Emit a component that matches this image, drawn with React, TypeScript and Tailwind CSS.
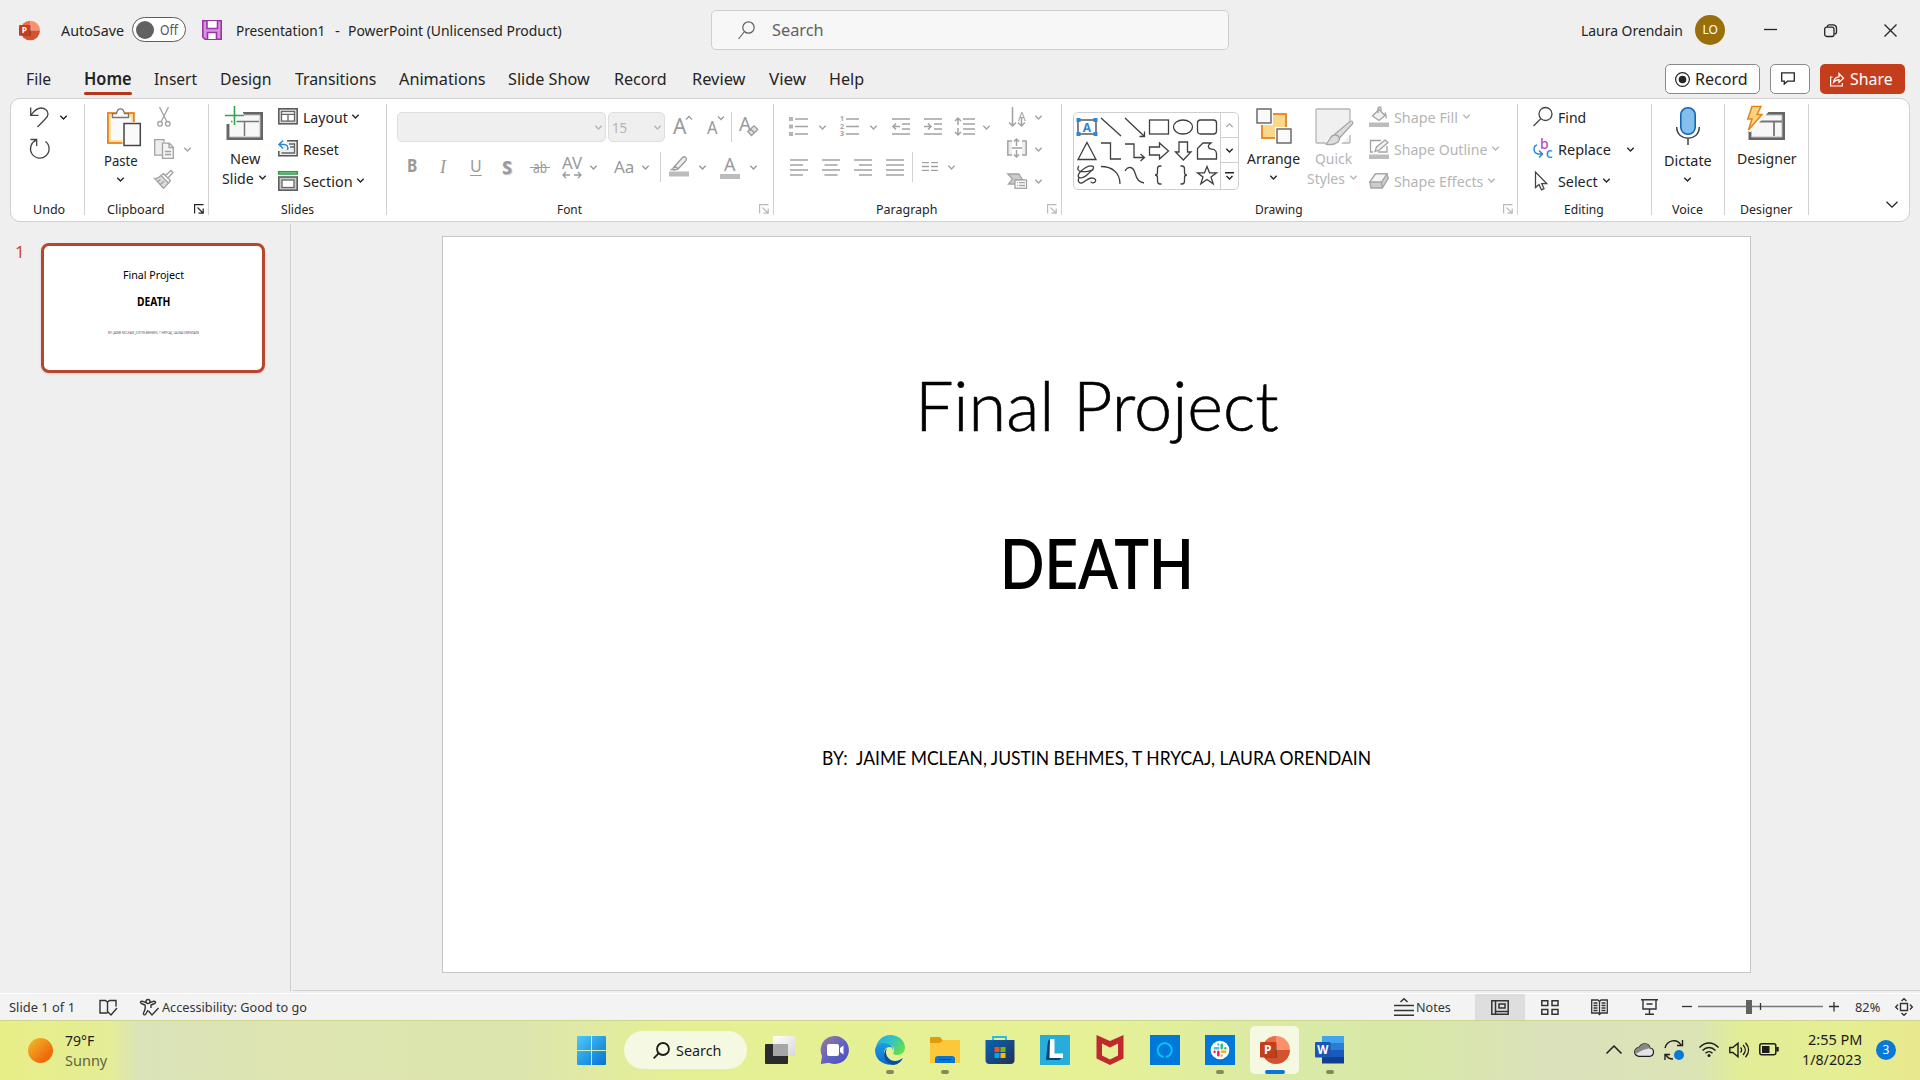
import React, { useLayoutEffect, useRef, useState } from 'react';

type TextProps = { w: number; children: string; className?: string };

/* Single line of text condensed or widened to the given width. */
function T({ w, children, className = '' }: TextProps) {
  const ref = useRef<HTMLSpanElement>(null);
  const [scale, setScale] = useState(1);
  useLayoutEffect(() => {
    if (ref.current) setScale(w / ref.current.offsetWidth);
  }, [w, children]);
  return (
    <span className={`block shrink-0 whitespace-nowrap leading-[20px] ${className}`} style={{ width: w }}>
      <span ref={ref} className="inline-block origin-left" style={{ transform: `scaleX(${scale})` }}>
        {children}
      </span>
    </span>
  );
}

type IconProps = { w: number; h: number; children: React.ReactNode; className?: string; sw?: number };

function I({ w, h, children, className = '', sw = 1.3 }: IconProps) {
  return (
    <svg width={w} height={h} viewBox={`0 0 ${w} ${h}`} fill="none" stroke="currentColor" strokeWidth={sw} className={`block shrink-0 overflow-visible ${className}`}>
      {children}
    </svg>
  );
}

function Chev({ className = '' }: { className?: string }) {
  return (
    <I w={7} h={5} sw={1.4} className={className}>
      <path d="M0.3 0.8 3.5 4 6.7 0.8" />
    </I>
  );
}

function Launcher({ className = '' }: { className?: string }) {
  return (
    <I w={10} h={10} sw={1.2} className={className}>
      <path d="M0.6 9.5V0.6H9.5M3.5 3.5 9 9M9.2 4.5V9.2H4.5" />
    </I>
  );
}

function Divider() {
  return <div className="mt-[5px] h-[111px] w-px shrink-0 bg-[#d1d1d1]" />;
}

type GroupProps = { className: string; label: string; labelW: number; labelClass: string; children: React.ReactNode; launcher?: string };

function Group({ className, label, labelW, labelClass, children, launcher }: GroupProps) {
  return (
    <>
      <section className={`flex shrink-0 flex-col ${className}`}>
        <div className="flex h-[99px]">{children}</div>
        <div className="flex h-[22px] items-center justify-between">
          <T w={labelW} className={`text-[13.3px] ${labelClass}`}>{label}</T>
          {launcher && <Launcher className={launcher} />}
        </div>
      </section>
      <Divider />
    </>
  );
}

function PptLogo({ size }: { size: number }) {
  return (
    <svg width={size} height={size} viewBox="0 0 30 30" className="block shrink-0">
      <path d="M16 1a14 14 0 0 0-14 14h14z" fill="#ed6c47" />
      <path d="M16 1a14 14 0 0 1 14 14H16z" fill="#ff8f6b" />
      <path d="M2 15a14 14 0 0 0 28 0z" fill="#d35230" />
      <path d="M5 7h10a2 2 0 0 1 2 2v14H5z" fill="#000" opacity=".25" />
      <rect y="7" width="15.5" height="15.5" rx="1.3" fill="#c43e1c" />
      <text x="7.8" y="19" textAnchor="middle" fontSize="12" fontWeight="700" fill="#fff" fontFamily="Noto Sans, sans-serif">P</text>
    </svg>
  );
}

function TitleBar() {
  return (
    <header className="flex h-[60px] items-center pl-[19px] text-[15px]">
      <PptLogo size={21} />
      <T w={63} className="ml-[21px]">AutoSave</T>
      <div className="-mt-px ml-2 flex h-[25px] w-[54px] items-center rounded-full border border-[#5c5c5c] bg-white pl-[3px]">
        <div className="size-[18px] rounded-full bg-[#616161]" />
        <T w={18} className="ml-[6px] text-[13.5px] text-[#555]">Off</T>
      </div>
      <I w={20} h={20} className="ml-4 text-[#9a35a8]" sw={1.6}>
        <path d="M.8.8h18.4v18.4H3L.8 17z" fill="#d993dd" />
        <path d="M5 1v7.5h10.500V1M5.500 19v-6.500h9V19" fill="#fff" />
      </I>
      <T w={89} className="ml-[14px]">Presentation1</T>
      <T w={5} className="ml-[10px]">-</T>
      <T w={214} className="ml-[8px]">PowerPoint (Unlicensed Product)</T>
      <div className="ml-[149px] flex h-[40px] w-[518px] items-center rounded-[5px] border border-[#cecece] bg-[#f7f7f7] pl-[26px] text-[#616161]">
        <I w={17} h={19} sw={1.2}>
          <circle cx="10.500" cy="6.500" r="5.700" />
          <path d="M6.500 10.500.5 18" />
        </I>
        <T w={52} className="-mt-px ml-[17px] text-[16px]">Search</T>
      </div>
      <T w={102} className="ml-[352px]">Laura Orendain</T>
      <div className="ml-[12px] flex size-[30px] items-center justify-center rounded-full bg-[#986f0b] text-white">
        <T w={15} className="text-[12px]">LO</T>
      </div>
      <I w={13} h={12} className="ml-[39px]"><path d="M0 5.500h13" /></I>
      <I w={13} h={13} className="ml-[47px]">
        <rect x=".7" y="3.200" width="9.300" height="9.300" rx="2" />
        <path d="M3.300 3V2.500A2 2 0 0 1 5 .8h4a3.500 3.500 0 0 1 3.500 3.500v4A2 2 0 0 1 10.500 10" />
      </I>
      <I w={13} h={13} className="ml-[47px]"><path d="M.5.5l12 12M12.500.5l-12 12" /></I>
    </header>
  );
}

function Tabs() {
  return (
    <nav className="flex h-[38px] items-center pl-[26px] text-[17px]">
      <T w={25}>File</T>
      <div className="ml-[33px] flex h-[38px] w-[48px] flex-col pt-[9px]">
        <T w={48} className="font-semibold">Home</T>
        <div className="mt-[3px] h-[3px] rounded-full bg-[#b7351b]" />
      </div>
      <T w={43} className="ml-[22px]">Insert</T>
      <T w={52} className="ml-[23px]">Design</T>
      <T w={81} className="ml-[23px]">Transitions</T>
      <T w={87} className="ml-[23px]">Animations</T>
      <T w={82} className="ml-[22px]">Slide Show</T>
      <T w={53} className="ml-[24px]">Record</T>
      <T w={53} className="ml-[25px]">Review</T>
      <T w={37} className="ml-[24px]">View</T>
      <T w={35} className="ml-[23px]">Help</T>
      <div className="ml-[801px] flex h-[30px] w-[95px] items-center rounded-[5px] border border-[#8a8a8a] bg-white pl-[9px]">
        <I w={15} h={15} sw={1.2}>
          <circle cx="7.500" cy="7.500" r="6.900" />
          <circle cx="7.500" cy="7.500" r="3.800" fill="currentColor" stroke="none" />
        </I>
        <T w={53} className="ml-[5px]">Record</T>
      </div>
      <div className="ml-[10px] flex h-[30px] w-[40px] items-center rounded-[5px] border border-[#8a8a8a] bg-white pl-[10px]">
        <I w={14} h={13} className="-mt-[2px]"><path d="M.7.8h12.600v8.400H6.500L3.300 12V9.200H.7z" /></I>
      </div>
      <div className="ml-[10px] flex h-[30px] w-[85px] items-center rounded-[5px] bg-[#c43e1c] pl-[10px] text-white">
        <I w={14} h={15} sw={1.2}>
          <path d="M2.500 5H.6v9h11.800v-3" />
          <path d="M3.500 10.500c.3-3.500 2-5.500 5.500-5.700V1.500l4.600 4.800L9 10.500V7.700c-2.500 0-4 .8-5.500 2.800z" />
        </I>
        <T w={43} className="ml-[6px]">Share</T>
      </div>
    </nav>
  );
}

function UndoGroup() {
  return (
    <Group className="w-[73px]" label="Undo" labelW={32} labelClass="ml-[22px]">
      <div className="flex flex-col pl-[19px] pt-[7px] text-[#444]">
        <div className="flex h-[22px] items-center">
          <I w={19} h={20}><path d="M.7.5v7.800h7.800M.9 8.100C4 4 6.500 1 11 1c4 0 7 2.500 7 6 0 2-1 3.300-2.500 4.800L7.500 20" /></I>
          <Chev className="ml-[11px] text-[#222]" />
        </div>
        <I w={20} h={21} className="mt-[10px]"><path d="M.5 1.500h6.200v6.500M6.300 2.200A9.300 9.300 0 1 0 15.500 3.500" /></I>
      </div>
    </Group>
  );
}

function ClipboardGroup() {
  return (
    <Group className="w-[123px]" label="Clipboard" labelW={58} labelClass="ml-[22px]" launcher="mr-[4px]">
      <div className="flex w-[53px] flex-col pl-[19px] pt-[9px]">
        <I w={34} h={38} className="ml-[3px]">
          <rect x=".9" y="5" width="26" height="30" fill="#fbe0a0" stroke="#e8821c" strokeWidth="1.800" />
          <rect x="4" y="9" width="20" height="23" fill="#fafafa" stroke="none" />
          <path d="M5.500 9.500V5.700h4C10 2.500 11 .9 13.500.9s3.500 1.600 4 4.800h4v3.800z" fill="#fafafa" stroke="#777" />
          <rect x="15.500" y="14" width="19" height="24" fill="#fff" stroke="none" />
          <rect x="17" y="15.500" width="16.300" height="22" fill="#fafafa" stroke="#444" strokeWidth="1.500" />
        </I>
        <T w={34} className="mt-[4px] text-[15px]">Paste</T>
        <Chev className="ml-[13px] mt-[7px]" />
      </div>
      <div className="flex flex-col pl-[16px] pt-[2px] text-[#a2a2a2]">
        <div className="flex h-8 items-center pl-[3px]">
          <I w={14} h={20}>
            <path d="M2.500 0 9.500 14M11.500 0l-7 14" />
            <circle cx="3" cy="16.800" r="2.300" /><circle cx="10.800" cy="16.800" r="2.300" />
          </I>
        </div>
        <div className="flex h-8 items-center">
          <I w={20} h={20}>
            <path d="M10 3V.7H.7v15.500H8" fill="#eee" />
            <path d="M8.500 4.200h6.800l4 4V19.300H8.500zM15 4.500v4h4M11 12.500h6M11 15.500h6" fill="#f4f4f4" />
          </I>
          <Chev className="ml-[10px]" />
        </div>
        <div className="flex h-8 items-center">
          <I w={20} h={19} className="-mt-[3px]">
            <path d="M.7 8.500c3 .5 4.500-1 6.300-3l7.500 7.500c-2 2-3 3.500-5 5.300z" fill="#ddd" />
            <path d="M7 5.500l2.500-1.800 7 6.800-2 2.500M11.500 5.500l5.500-5 2 2-5 5.500M3.500 12l3-2.500M6 15l4-4" />
          </I>
        </div>
      </div>
    </Group>
  );
}

function SlidesGroup() {
  return (
    <Group className="w-[177px]" label="Slides" labelW={33} labelClass="ml-[72px]">
      <div className="flex w-[69px] flex-col pl-[13px] pt-[7px] text-[15px]">
        <I w={38} h={35} className="ml-[3px] text-[#777]">
          <path d="M18 7.500h18.500V32.500H3V18" fill="#f7f7f7" stroke="#666" strokeWidth="3" />
          <path d="M6 15.500H34M19.500 15.500V30" strokeWidth="1.500" />
          <path d="M4.500 18V31H35V9H18" fill="none" stroke="#bbb" strokeWidth="1" />
          <path d="M9.500 0v19M0 9.500h19" stroke="#fff" strokeWidth="4" />
          <path d="M9.500 0v19M0 9.500h19" stroke="#2da44e" strokeWidth="1.600" />
        </I>
        <T w={30} className="ml-[8px] mt-[7px]">New</T>
        <div className="flex h-5 items-center">
          <T w={32}>Slide</T>
          <Chev className="-mt-[2px] ml-[5px]" />
        </div>
      </div>
      <div className="flex flex-col pt-[2px] text-[15px]">
        <div className="flex h-8 items-center">
          <I w={20} h={17} className="-mt-px text-[#666]">
            <rect x=".8" y=".8" width="18.400" height="15" fill="#ddd" stroke="#555" strokeWidth="1.500" />
            <rect x="3.500" y="3.500" width="13" height="9.600" fill="#fff" /><path d="M3.500 6.300h13M10 6.300v7" />
          </I>
          <T w={45} className="ml-[5px]">Layout</T>
          <Chev className="-mt-[2px] ml-[4px]" />
        </div>
        <div className="flex h-8 items-center">
          <I w={20} h={17} className="-mt-px text-[#666]">
            <path d="M9 .8h10.200v15H.8V11" fill="#eee" stroke="#555" strokeWidth="1.500" />
            <path d="M11 4h5.500v9h-13M12 7h4" />
            <path d="M1 4.500h5c3 0 4.500 2 4 5.500M5 .5 1 4.500l4 4" stroke="#fff" strokeWidth="3.500" />
            <path d="M1 4.500h5c3 0 4.500 2 3.500 5.500M5 .5 1 4.500l4 4" stroke="#2b88d8" strokeWidth="1.500" />
          </I>
          <T w={36} className="ml-[5px]">Reset</T>
        </div>
        <div className="flex h-8 items-center">
          <I w={20} h={20} className="-mt-px text-[#666]">
            <rect x=".6" y=".6" width="18.800" height="2.500" fill="#6fcf87" stroke="#2d9a4a" />
            <rect x=".8" y="6" width="18.400" height="13.200" fill="#ccc" stroke="#555" strokeWidth="1.500" />
            <rect x="4" y="9" width="12" height="7.500" fill="#fff" />
          </I>
          <T w={50} className="ml-[5px]">Section</T>
          <Chev className="-mt-[2px] ml-[4px]" />
        </div>
      </div>
    </Group>
  );
}

function FontGroup() {
  return (
    <Group className="w-[386px]" label="Font" labelW={25} labelClass="ml-[170px]" launcher="mr-[4px] text-[#b8b8b8]">
      <div className="flex flex-col pt-[13px] text-[#9a9a9a]">
        <div className="flex h-[30px] items-center">
          <div className="ml-[10px] flex h-[30px] w-[209px] items-center justify-end rounded-[5px] border border-[#dedede] bg-[#efefef] pr-[3px] text-[#b5b5b5]"><Chev /></div>
          <div className="ml-[2px] flex h-[30px] w-[57px] items-center justify-between rounded-[5px] border border-[#dedede] bg-[#efefef] pl-[3px] pr-[3px] text-[#b5b5b5]">
            <T w={15} className="text-[15px]">15</T><Chev />
          </div>
          <div className="-mt-[4px] ml-[8px] flex items-start">
            <T w={13} className="mt-px text-[21px]">A</T>
            <I w={6} h={4} className="mt-px"><path d="M0 3.500 3 .5l3 3" /></I>
          </div>
          <div className="-mt-[3px] ml-[15px] flex items-start">
            <T w={11} className="mt-[2px] text-[18px]">A</T>
            <I w={6} h={4} className="mt-px"><path d="M0 .5l3 3 3-3" /></I>
          </div>
          <div className="ml-[7px] h-[30px] w-px bg-[#d1d1d1]" />
          <div className="ml-[7px] flex items-center">
            <T w={12} className="mb-[6px] text-[19px]">A</T>
            <I w={11} h={11} className="-ml-[4px] mt-[7px]"><path d="M.8 6.500 7 .8l3.800 3.700L4.500 10.500zM3.500 4l4 3.800" fill="#e4e4e4" /></I>
          </div>
        </div>
        <div className="mt-[10px] flex h-[30px] items-center">
          <T w={10} className="-mt-[2px] ml-[20px] text-[17px] font-bold">B</T>
          <span className="ml-[23px] w-[8px] font-['Liberation_Serif',serif] text-[18px] italic leading-5">I</span>
          <T w={12} className="-mt-[3px] ml-[22px] text-[16px] [&>span]:underline [&>span]:underline-offset-[3px]">U</T>
          <T w={10} className="-mt-px ml-[20px] text-[18px] font-bold [text-shadow:1px_1px_1px_#bbb]">S</T>
          <T w={20} className="ml-[18px] text-[16px] [&>span]:line-through">&nbsp;ab&nbsp;</T>
          <div className="-mt-[3px] ml-[12px] flex w-5 flex-col">
            <T w={20} className="text-[16px] leading-[14px]">AV</T>
            <I w={20} h={6} className="-mt-px"><path d="M4 0 1 3l3 3M1 3h7M16 0l3 3-3 3M19 3h-7" /></I>
          </div>
          <Chev className="ml-[8px]" />
          <T w={20} className="ml-[17px] text-[17px]">Aa</T>
          <Chev className="ml-[8px]" />
          <div className="ml-[11px] h-[30px] w-px bg-[#d1d1d1]" />
          <I w={20} h={21} className="-mt-px ml-[8px]">
            <path d="M5.500 10.500 13.500 1.500c2-2 5 .5 3.500 3L9.500 12.500zM5 10.500l-1.500 3 1 .5 5-1M4 13.500H1.500" fill="#eee" />
            <rect y="15.500" width="20" height="5" fill="#bcbcbc" stroke="none" />
          </I>
          <Chev className="ml-[10px]" />
          <div className="-mt-[2px] ml-[14px] flex w-5 flex-col items-center">
            <T w={12} className="text-[18px] leading-[17px]">A</T>
            <div className="h-[5px] w-5 bg-[#bcbcbc]" />
          </div>
          <Chev className="ml-[10px]" />
        </div>
      </div>
    </Group>
  );
}

function ParagraphGroup() {
  return (
    <Group className="w-[287px]" label="Paragraph" labelW={61} labelClass="ml-[102px]" launcher="mr-[4px] text-[#b8b8b8]">
      <div className="flex w-[233px] flex-col pt-[13px] text-[#a2a2a2]">
        <div className="flex h-[30px] items-center pl-[15px]">
          <I w={19} h={19} sw={1.5} className="-mt-px">
            <path d="M6 2h13M6 9.500h13M6 17h13" />
            <path d="M2 0v4M2 7.500v4M2 15v4" strokeWidth="4" stroke="#b5b5b5" />
          </I>
          <Chev className="ml-[11px]" />
          <div className="-mt-px ml-[14px] flex items-center">
            <div className="flex w-[5px] flex-col text-[7px] font-bold leading-[7.500px]"><span>1</span><span>2</span><span>3</span></div>
            <I w={13} h={17} sw={1.5} className="ml-px"><path d="M0 1h13M0 8.500h13M0 16h13" /></I>
          </div>
          <Chev className="ml-[11px]" />
          <I w={18} h={17} sw={1.5} className="-mt-px ml-[15px]"><path d="M0 1h18M10 6h8M10 11h8M0 16h18M8 8.500H1M4 5.500l-3 3 3 3" /></I>
          <I w={18} h={17} sw={1.5} className="-mt-px ml-[14px]"><path d="M0 1h18M10 6h8M10 11h8M0 16h18M0 8.500h7M4 5.500l3 3-3 3" /></I>
          <I w={20} h={17} sw={1.5} className="-mt-px ml-[13px]"><path d="M8 1h12M8 6h12M8 11h12M8 16h12M3 7V0M0 3l3-3 3 3M3 10v7M0 14l3 3 3-3" /></I>
          <Chev className="ml-[8px]" />
        </div>
        <div className="mt-[10px] flex h-[30px] items-center pl-[16px]">
          <I w={18} h={17} sw={1.6}><path d="M0 1h18M0 6h13M0 11h18M0 16h13" /></I>
          <I w={18} h={17} sw={1.6} className="ml-[14px]"><path d="M0 1h18M2.500 6h13M0 11h18M2.500 16h13" /></I>
          <I w={18} h={17} sw={1.6} className="ml-[14px]"><path d="M0 1h18M5 6h13M0 11h18M5 16h13" /></I>
          <I w={18} h={17} sw={1.6} className="ml-[14px]"><path d="M0 1h18M0 6h18M0 11h18M0 16h18" /></I>
          <div className="ml-[8px] h-[30px] w-px bg-[#d1d1d1]" />
          <I w={16} h={9} className="-mt-px ml-[9px]"><path d="M0 .7h7M9 .7h7M0 4.500h7M9 4.500h7M0 8.400h7M9 8.400h7" /></I>
          <Chev className="ml-[10px]" />
        </div>
      </div>
      <div className="flex flex-col pt-[2px] text-[#a2a2a2]">
        <div className="flex h-8 items-center">
          <div className="flex w-5">
            <I w={8} h={20} sw={1.5}><path d="M5.500 0v19M2 15.500 5.500 19 9 15.500M14.500 10v9M11 15.500l3.500 3.500 3.500-3.500" /></I>
            <T w={8} className="ml-[3px] text-[12px] leading-[10px]">A</T>
          </div>
          <Chev className="ml-[8px]" />
        </div>
        <div className="flex h-8 items-center">
          <I w={20} h={18} sw={1.5} className="-mt-[2px]">
            <path d="M5 2H.8v14H5M15 2h4.200v14H15" fill="#eee" /><path d="M5 9h10M9.500 7V0M7 2.500 9.500 0 12 2.500M9.500 11v7M7 15.500 9.500 18l2.500-2.500" />
          </I>
          <Chev className="ml-[8px]" />
        </div>
        <div className="flex h-8 items-center">
          <I w={20} h={16} className="-mt-px">
            <path d="M.8 1h11l4 6H8.500v4H1.500L5.500 6z" fill="#ccc" />
            <rect x="8" y="7" width="11.500" height="8.300" fill="#fff" /><path d="M10 9.700h1M12 9.700h6M10 12.500h1M12 12.500h6" />
          </I>
          <Chev className="ml-[8px]" />
        </div>
      </div>
    </Group>
  );
}

const shapes: React.ReactNode[] = [
  <><rect x="3" y="5" width="18" height="14" /><text x="12" y="16.500" textAnchor="middle" fontSize="12" fontWeight="700" fill="#2b88d8" stroke="none">A</text><path d="M1.500 5h4M18.500 5h4M1.500 19h4M18.500 19h4" stroke="#2b88d8" strokeWidth="4" /></>,
  <path d="M2 3l20 18" />,
  <path d="M2 3l19 18M21.500 16.500v5h-5" />,
  <rect x="2.500" y="5" width="19" height="14" />,
  <ellipse cx="12" cy="12" rx="9.500" ry="7" />,
  <rect x="2.500" y="5" width="19" height="14" rx="3" />,
  <path d="M12 3.500 21 20.500H3z" />,
  <path d="M2 4h9.500v16H22" />,
  <path d="M2 5h9v13.500h10M17.500 15l4 3.500-4 3.500" />,
  <path d="M2.500 8h10V4l9 8-9 8v-4h-10z" />,
  <path d="M8 3h8.500v10H20l-7.700 8L4.500 13H8z" />,
  <path d="M2.500 20V9.500L8 4h8c-2.500 2-3.500 3-2 5 1.500 2 3.500.5 5 1.500 1.800 1 2.500 2 2.500 4V20z" />,
  <path d="M4 3C2 5 2.500 8 6 8.500c5 .5 12-.5 12.500-3.500S14 2.500 10 5s-8 7-6.500 9 6 .5 9-2.500 5-5 6-4.500M4 14.500c-1.500 3-.5 6 2.500 5.500s6-5 10-5 5 2.500 3.500 4-4 1-4-.5" />,
  <path d="M2 3.500c11 0 19 6 19 17.500" />,
  <path d="M2 8c3-5 8-5 10 2s4 9 9 10" />,
  <path d="M14.500 3H13c-2 0-2.500 1-2.500 3v3.500c0 2-1 2.500-2.500 2.500 1.500 0 2.500.5 2.500 2.500V18c0 2 .5 3 2.500 3h1.500" />,
  <path d="M9.500 3H11c2 0 2.500 1 2.500 3v3.500c0 2 1 2.500 2.500 2.500-1.500 0-2.500.5-2.500 2.500V18c0 2-.5 3-2.500 3H9.500" />,
  <path d="M12 3.500l2.500 6.300H21.500l-5.500 4.100 2.200 7L12 16.500 5.800 20.900 8 13.900 2.500 9.800h7z" />,
];

function DrawingGroup() {
  return (
    <Group className="w-[455px]" label="Drawing" labelW={48} labelClass="ml-[193px]" launcher="mr-[4px] text-[#b8b8b8]">
      <div className="ml-[11px] mt-[13px] flex h-[78px] w-[166px] shrink-0 rounded-[5px] border border-[#cfcfcf]">
        <div className="grid h-[76px] w-[146px] grid-cols-[repeat(6,24px)] grid-rows-[repeat(3,24px)] pl-px pt-[2px] text-[#3f3f3f]">
          {shapes.map((s, i) => <I key={i} w={24} h={24}>{s}</I>)}
        </div>
        <div className="flex w-[18px] flex-col border-l border-[#cfcfcf]">
          <div className="flex h-[25px] items-center justify-center border-b border-[#cfcfcf] text-[#aaa]"><I w={7} h={5}><path d="M.3 4 3.500.8 6.700 4" /></I></div>
          <div className="flex h-[25px] items-center justify-center border-b border-[#cfcfcf]"><Chev /></div>
          <div className="flex h-[26px] items-center justify-center"><I w={9} h={8} sw={1.4} className="-mt-px"><path d="M0 .7h9M1.500 4 4.500 7l3-3" /></I></div>
        </div>
      </div>
      <div className="flex w-[60px] shrink-0 flex-col pl-[8px] pt-[9px] text-[15px]">
        <I w={36} h={36} className="ml-[9px]">
          <rect x="6" y="6" width="24" height="24" fill="#f8d98b" stroke="#e8821c" strokeWidth="1.800" />
          <rect x="-1" y="-1" width="18" height="18" fill="#fff" stroke="none" /><rect x="19" y="19" width="18" height="18" fill="#fff" stroke="none" />
          <rect x="1" y="1" width="14" height="14" fill="#fafafa" stroke="#555" /><rect x="21" y="21" width="14" height="14" fill="#fafafa" stroke="#555" />
        </I>
        <T w={53} className="mt-[4px]">Arrange</T>
        <Chev className="ml-[23px] mt-[7px]" />
      </div>
      <div className="flex w-[70px] shrink-0 flex-col pl-[8px] pt-[9px] text-[15px] text-[#b5b5b5]">
        <I w={38} h={38} className="ml-[8px]">
          <rect x="1" y="1" width="34" height="34" rx="1" fill="#f0f0f0" />
          <path d="M9 38c4-10 8-12 13-12L36 12v14L24 38z" fill="#fff" stroke="none" />
          <path d="M10.500 36c4-1 3.500-9 9.500-9 4 0 6 4 3 7-3 2.500-8 3-12.500 2zM19.500 26.500 35 13.500c2-1 3.500.5 2.500 2.300L24 30.500" fill="#ddd" stroke="#a5a5a5" />
        </I>
        <T w={37} className="ml-[8px] mt-[2px]">Quick</T>
        <div className="flex h-5 items-center"><T w={38}>Styles</T><Chev className="-mt-[2px] ml-[5px]" /></div>
      </div>
      <div className="flex flex-col pt-[2px] text-[15px] text-[#b5b5b5]">
        <div className="flex h-8 items-center">
          <I w={20} h={20} className="-mt-px text-[#a2a2a2]">
            <path d="M3.500 9 10 2.500l6 6-6 5zM9 6V1.500c0-2 3-2 3 0v3M16 5.500c1 2 1.500 3 1.200 6" fill="#f0f0f0" />
            <rect y="15.500" width="20" height="4.500" fill="#bcbcbc" stroke="none" />
          </I>
          <T w={64} className="ml-[5px]">Shape Fill</T><Chev className="-mt-[2px] ml-[5px]" />
        </div>
        <div className="flex h-8 items-center">
          <I w={20} h={20} className="-mt-px text-[#a2a2a2]">
            <path d="M12 1.500H1.500V13H4M18 7v6H9" /><path d="M6 12.500l1.500-4.500L16 1l3 2.500L10.500 11z" fill="#f0f0f0" />
            <rect y="15.500" width="20" height="4.500" fill="#bcbcbc" stroke="none" />
          </I>
          <T w={93} className="ml-[5px]">Shape Outline</T><Chev className="-mt-[2px] ml-[5px]" />
        </div>
        <div className="flex h-8 items-center">
          <I w={20} h={16} className="-mt-px text-[#a2a2a2]">
            <path d="M.8 9 6.500.8h11.500l1.300 4.700-6 9.500H2z" fill="#ccc" /><path d="M6.500.8h11.500L12.500 9H.8zM12.500 9l.8 6" fill="#f6f6f6" />
          </I>
          <T w={89} className="ml-[5px]">Shape Effects</T><Chev className="-mt-[2px] ml-[5px]" />
        </div>
      </div>
    </Group>
  );
}

function EditingGroup() {
  return (
    <Group className="w-[133px]" label="Editing" labelW={40} labelClass="ml-[46px]">
      <div className="flex flex-col pl-[15px] pt-[2px] text-[15px]">
        <div className="flex h-8 items-center">
          <I w={20} h={19} className="-mt-[2px] text-[#444]"><circle cx="12.500" cy="7" r="6.500" /><path d="M8 11.500.5 19" /></I>
          <T w={28} className="ml-[5px]">Find</T>
        </div>
        <div className="flex h-8 items-center">
          <div className="flex h-5 w-5 items-start text-[14px] leading-none">
            <I w={7} h={18} sw={1.5} className="text-[#2b88d8]"><path d="M4 6c-4 1-4 8 1 9h4M6 11.500l3.500 3.500-3.500 3.500" /></I>
            <span className="-mt-px font-medium leading-[11px] text-[#b94cc0]">b</span>
            <span className="-ml-[3px] mt-[8px] font-medium leading-[12px] text-[#2b88d8]">c</span>
          </div>
          <T w={53} className="ml-[5px]">Replace</T><Chev className="ml-[16px]" />
        </div>
        <div className="flex h-8 items-center">
          <I w={20} h={19} className="-mt-px text-[#444]"><path d="M2.500 1v15.500l3.500-3 2.500 5.300 2.500-1.200-2.300-5h5z" /></I>
          <T w={40} className="ml-[5px]">Select</T><Chev className="-mt-[2px] ml-[5px]" />
        </div>
      </div>
    </Group>
  );
}

function Ribbon() {
  return (
    <div className="mx-[10px] flex h-[124px] rounded-[10px] border border-[#d0d0d0] bg-white">
      <UndoGroup />
      <ClipboardGroup />
      <SlidesGroup />
      <FontGroup />
      <ParagraphGroup />
      <DrawingGroup />
      <EditingGroup />
      <Group className="w-[72px]" label="Voice" labelW={31} labelClass="ml-[20px]">
        <div className="flex flex-col pl-[12px] pt-[8px] text-[15px]">
          <I w={24} h={38} className="ml-[12px]">
            <rect x="4.800" y=".8" width="14.400" height="26.500" rx="7" fill="#83beec" stroke="#1267b4" strokeWidth="1.600" />
            <path d="M.7 20c0 15 22.600 15 22.600 0M12 31v7" stroke="#444" strokeWidth="1.500" />
          </I>
          <T w={48} className="mt-[5px]">Dictate</T>
          <Chev className="ml-[20px] mt-[7px]" />
        </div>
      </Group>
      <Group className="w-[83px]" label="Designer" labelW={52} labelClass="ml-[15px]">
        <div className="flex flex-col pl-[12px] pt-[7px] text-[15px]">
          <I w={38} h={35} className="ml-[10px] text-[#777]">
            <path d="M13 7.500h23.500V32.500H3V24" fill="#f7f7f7" stroke="#666" strokeWidth="3" />
            <path d="M13 9H35v22H4.500v-7" stroke="#bbb" strokeWidth="1" />
            <path d="M11 15.500h24M27 15.500V30" strokeWidth="1.800" />
            <path d="M5 0h10l-4 8h6L2 25l3.500-12H.5z" fill="#fbd57e" stroke="#fff" strokeWidth="4" />
            <path d="M5 .5h9l-4 8h5L1.500 24 5 13H.8z" fill="#fbd57e" stroke="#e8821c" strokeWidth="1.500" />
          </I>
          <T w={60} className="mt-[7px]">Designer</T>
        </div>
      </Group>
      <I w={12} h={7} className="ml-auto mr-[11px] mt-[102px]"><path d="M.5.800 6 6.200l5.500-5.400" /></I>
    </div>
  );
}

function Workspace() {
  return (
    <main className="flex h-[771px]">
      <aside className="flex w-[290px] shrink-0 pl-[15px] pt-[21px]">
        <span className="w-[26px] shrink-0 text-[17px] leading-[18px] text-[#d24726]">1</span>
        <div className="flex h-[130px] w-[224px] flex-col items-center rounded-[8px] border-[3px] border-[#b7472a] bg-white pt-[19px] text-black shadow-sm">
          <T w={61} className="text-[11.500px]">Final Project</T>
          <T w={33} className="mt-[7px] text-[11.500px] font-bold">DEATH</T>
          <T w={91} className="mt-[11px] text-[3px] text-[#555]">BY: JAIME MCLEAN, JUSTIN BEHMES, T HRYCAJ, LAURA ORENDAIN</T>
        </div>
      </aside>
      <div className="mt-[2px] h-[767px] w-px shrink-0 bg-[#cfcfcf]" />
      <div className="ml-[2px] flex h-[769px] flex-1 border-b border-[#d2d2d2] pl-[149px] pt-[14px]">
        <div className="flex h-[737px] w-[1309px] flex-col items-center border border-[#c6c6c6] bg-white pt-[118px] font-['Lato',sans-serif] text-black">
          <T w={364} className="text-[68px] font-light leading-[100px] [-webkit-text-stroke:0.6px_black]">Final Project</T>
          <T w={194} className="mt-[58px] text-[69px] font-semibold leading-[100px]">DEATH</T>
          <T w={549} className="mt-[135px] text-[18.500px]">BY:&nbsp; JAIME MCLEAN, JUSTIN BEHMES, T HRYCAJ, LAURA ORENDAIN</T>
        </div>
      </div>
    </main>
  );
}

function StatusBar() {
  return (
    <footer className="flex h-[27px] items-center border-t border-white bg-[#f3f3f3] pl-[9px] text-[13.300px] text-[#333]">
      <T w={66}>Slide 1 of 1</T>
      <I w={18} h={17} className="ml-[24px]" sw={1.4}><path d="M8.500 14H1V1.500h5.500L8.500 3l2-1.500H17v6M8.500 3v11M8.500 12.500l3.500 3.500 6-7" /></I>
      <I w={19} h={17} className="ml-[23px]" sw={1.4}>
        <circle cx="8" cy="2.500" r="2" /><path d="M6 3.500 2 2.200C0 2 0 4 1.500 4.500L5 6c1 3-.5 6-1.500 8-.5 2 1.500 2.500 2.300 1L8 11M10 3.500l4-1.300c2 0 2 1.800.5 2.300L11 6v3M8.500 12l3.500 4 6.500-7" />
      </I>
      <T w={145} className="ml-[3px]">Accessibility: Good to go</T>
      <I w={20} h={18} className="ml-[1087px]" sw={1.5}><path d="M0 7.500h20M0 12.500h20M0 17.300h20M6.500 4 10 .7 13.500 4" /></I>
      <T w={35} className="ml-[2px]">Notes</T>
      <div className="ml-[24px] flex h-full w-[50px] items-center justify-center bg-[#dedede]">
        <I w={18} h={15} sw={1.5}><path d="M.8.800h16.400v13.400H.8zM4.500 1v13M4.500 11.500H17M8 4h6v4H8z" /></I>
      </div>
      <I w={18} h={15} className="ml-4" sw={1.5}><path d="M.8.800h6v4.700h-6zM11 .8h6v4.700h-6zM.8 9.500h6v4.700h-6zM11 9.500h6v4.700h-6z" /></I>
      <I w={17} h={16} className="-mt-px ml-[32px]" sw={1.3}><path d="M8.500 2.500 7 1H.7v13H7l1.500 1.500L10 14h6.300V1H10zM8.500 2.500v13M2.500 4H6.500M2.500 6.500h4M2.500 9h4M2.500 11.500h4M10.500 4h4M10.500 6.500h4M10.500 9h4M10.500 11.500h4" /></I>
      <I w={17} h={16} className="-mt-px ml-[33px]" sw={1.4}><path d="M0 .7h17M2 1v9h13V1M5.500 5h6M8.500 10v5.300M4 15.300h9" /></I>
      <I w={10} h={10} className="ml-6"><path d="M0 4.500h10" /></I>
      <I w={125} h={14} className="ml-[6px]"><path d="M0 6.500h125" stroke="#777" /><path d="M62.500 3v7" /><path d="M51 0v14" stroke="#616161" strokeWidth="6" /></I>
      <I w={10} h={10} className="ml-[6px]"><path d="M0 4.500h10M5 0v9.500" /></I>
      <T w={25} className="ml-4">82%</T>
      <I w={18} h={18} className="-mt-px ml-[15px]" sw={1.4}><path d="M5.500 5.500h7v7h-7zM6.500 3 9 .7 11.500 3M6.500 15 9 17.300l2.500-2.300M3 6.500.7 9 3 11.500M15 6.500l2.300 2.500-2.300 2.500" /></I>
    </footer>
  );
}

function Dot() {
  return <div className="mt-[5px] h-[4px] w-2 rounded-full bg-[#858a5a]" />;
}

function TaskApp({ children, running = false }: { children: React.ReactNode; running?: boolean }) {
  return (
    <div className="flex h-[60px] w-[55px] shrink-0 flex-col items-center pt-[14px]">
      <svg width="30" height="30" viewBox="0 0 30 30" className="block shrink-0">{children}</svg>
      {running && <Dot />}
    </div>
  );
}

function Taskbar() {
  return (
    <div className="flex h-[60px] items-center border-t border-[#ccd58a] bg-[linear-gradient(90deg,#e8ee86_0,#e4ed97_110px,#dae3b9_140px,#dee5b1_300px,#dde5ae_520px,#e5f094_680px,#e6f196_1100px,#d9e9a6_1300px,#d8e8a8_1420px,#dbe1bc_1550px,#dbe4b5_1700px,#e2ed97_1740px,#e5ee92_1850px,#e8e88d_1920px)] pl-[28px] text-[14.500px] text-[#1c1c1c]">
      <div className="-mt-px size-[25px] rounded-full bg-[linear-gradient(135deg,#efc02e,#ef6a0a_75%)]" />
      <div className="-mt-[2px] ml-[12px] flex w-[42px] flex-col">
        <T w={29}>79°F</T>
        <T w={42} className="text-[#5f6440]">Sunny</T>
      </div>
      <svg width="29" height="29" className="-mt-px ml-[470px] shrink-0" viewBox="0 0 29 29">
        <defs><linearGradient id="win" x1="0" y1="0" x2="1" y2="1"><stop stopColor="#4cc9fa" /><stop offset="1" stopColor="#0473d0" /></linearGradient></defs>
        <path d="M0 1a1 1 0 0 1 1-1h13v14H0zM15 0h13a1 1 0 0 1 1 1v13H15zM0 15h14v14H1a1 1 0 0 1-1-1zM15 15h14v13a1 1 0 0 1-1 1H15z" fill="url(#win)" />
      </svg>
      <div className="-mt-px ml-[18px] flex h-[38px] w-[123px] shrink-0 items-center rounded-full bg-[#f6f9e2] pl-[29px]">
        <I w={17} h={17} sw={1.8}><circle cx="10" cy="7" r="6" /><path d="M5.800 11.200.7 16.300" /></I>
        <T w={45} className="ml-[6px] text-[15px]">Search</T>
      </div>
      <div className="ml-[5px] flex">
        <TaskApp>
          <defs><linearGradient id="tv" x1="0" y1="0" x2="1" y2="1"><stop stopColor="#fff" /><stop offset="1" stopColor="#d8d8d8" /></linearGradient></defs>
          <rect y="9" width="23" height="20" rx="1" fill="#2b2b2b" /><rect x="8" y="1" width="22" height="20" rx="1" fill="url(#tv)" /><path d="M8 9h15v12H8z" fill="#a6a6a6" />
        </TaskApp>
        <TaskApp>
          <defs><linearGradient id="chat" x1="0" y1="0" x2="1" y2="1"><stop stopColor="#9a7b98" /><stop offset=".6" stopColor="#5b5fc7" /><stop offset="1" stopColor="#4d50b0" /></linearGradient></defs>
          <path d="M15 1a14 14 0 1 1-6 26.700L.8 29l1.200-8A14 14 0 0 1 15 1z" fill="url(#chat)" />
          <rect x="7" y="9" width="12" height="12" rx="2" fill="#fff" /><path d="M20 13l3.500-2.500v9L20 17z" fill="#fff" />
        </TaskApp>
        <TaskApp running>
          <defs>
            <linearGradient id="e1" x1="0" y1="0" x2="1" y2=".6"><stop stopColor="#2aa5e0" /><stop offset=".5" stopColor="#2fc3c9" /><stop offset="1" stopColor="#66dd4f" /></linearGradient>
            <linearGradient id="e2" x1="0" y1="0" x2="0" y2="1"><stop stopColor="#1b9de2" /><stop offset="1" stopColor="#0a6bd0" /></linearGradient>
          </defs>
          <path d="M1 12C2.500 5 8 0 15 0c9 0 15 6 15 12.500 0 5-4 7.500-8 7.500-3 0-4.500-1.200-3.500-2.500 1.500-3 .5-7-4.500-7.500C8 8 2 9 1 12z" fill="url(#e1)" />
          <path d="M0 15C1 8 7 7 12 8.500c4 1 7 4 6 7l-1-3c-5-2-8 2-8 6 0 7 6 10 10 10.900C10 31 0 26 0 15z" fill="url(#e2)" />
          <path d="M12 13.500c-3 5 1 12 8 12.500 3 0 6-1.500 8-3-2.500 5-7 7.500-11 6.800-6-1.500-10-8-7-13.800.5-1 1-2 2-2.500z" fill="#0b4fa0" />
        </TaskApp>
        <TaskApp running>
          <path d="M0 3a1 1 0 0 1 1-1h9l2.500 3H29a1 1 0 0 1 1 1v4H0z" fill="#dd9c08" />
          <path d="M0 8h10l3-3h17v23H0z" fill="#fcc739" /><path d="M5 28v-4a3 3 0 0 1 3-3h14a3 3 0 0 1 3 3v4z" fill="#0b76cf" /><path d="M9 24.500h12" stroke="#064a8c" />
        </TaskApp>
        <TaskApp>
          <defs><linearGradient id="store" x1="0" y1="0" x2="1" y2="1"><stop stopColor="#0a64b4" /><stop offset="1" stopColor="#223055" /></linearGradient></defs>
          <path d="M8 7V2h13v5" fill="none" stroke="#28b9ea" strokeWidth="1.800" /><path d="M.5 5h29v20a4 4 0 0 1-4 4h-21a4 4 0 0 1-4-4z" fill="url(#store)" />
          <path d="M9.500 12h5v5h-5z" fill="#f25022" /><path d="M15.500 12h5v5h-5z" fill="#7fba00" /><path d="M9.500 18h5v5h-5z" fill="#00a4ef" /><path d="M15.500 18h5v5h-5z" fill="#ffb900" />
        </TaskApp>
        <TaskApp>
          <path d="M0 0h30v30H0z" fill="#26addb" /><path d="M8 6l2-2v16l11 3-1.500 2H6z" fill="#0c3f75" /><path d="M10 4h4.500v14.500H23V23H9.500z" fill="#fff" />
        </TaskApp>
        <TaskApp>
          <path d="M1.500 0 15 6 28.500 0v23.500L15 30 1.500 23.500zM7 8.500v12l8 4 8-4v-12l-8 4z" fill="#c02a2c" fillRule="evenodd" />
        </TaskApp>
        <TaskApp>
          <path d="M0 0h30v30H0z" fill="#0078d7" /><path d="M13.500 22a7 7 0 1 1 2.500 0" fill="none" stroke="#00cafa" strokeWidth="1.800" />
        </TaskApp>
        <TaskApp running>
          <path d="M0 0h30v30H0z" fill="#0078d7" /><circle cx="15" cy="15" r="9.300" fill="#fff" />
          <g strokeWidth="2.400" strokeLinecap="round" fill="none">
            <path d="M9.800 13.200h3.500M13.300 9.500v.1" stroke="#36c5f0" /><path d="M16.700 9.800v3.500M20.400 13.300v.1" stroke="#2eb67d" />
            <path d="M16.800 16.800h3.500M16.700 20.500v.1" stroke="#ecb22e" /><path d="M13.300 16.800v3.500M9.600 16.700v.1" stroke="#e01e5a" />
          </g>
        </TaskApp>
        <div className="mx-[3px] mb-px flex h-[48px] w-[49px] shrink-0 flex-col items-center self-center rounded-[5px] bg-[#f6f9e2] pt-[9px]">
          <PptLogo size={30} />
          <div className="mt-[5px] h-[4px] w-5 rounded-full bg-[#0a76d6]" />
        </div>
        <TaskApp running>
          <path d="M7 1h22v7H7z" fill="#41a5ee" /><path d="M7 8h22v7H7z" fill="#2b7cd3" /><path d="M7 15h22v7H7z" fill="#185abd" /><path d="M7 22h22v6.500H7z" fill="#103f91" />
          <rect y="7" width="15.500" height="15.500" rx="1.300" fill="#1b56b5" />
          <text x="7.700" y="18.800" textAnchor="middle" fontSize="11.500" fontWeight="700" fill="#fff">W</text>
        </TaskApp>
      </div>
      <div className="-mt-[2px] ml-auto flex items-center pr-6">
        <I w={16} h={9} sw={1.5}><path d="M.5 8.500 8 1l7.500 7.500" /></I>
        <I w={20} h={14} className="ml-[12px]" sw={1.2}>
          <path d="M5 13.300a4.300 4.300 0 0 1 0-8.600C8-1 15 0 16 5c5 .5 4.500 8.300-.5 8.300z" fill="#e3e3e3" />
          <path d="M1.500 11C0 7 2.500 4.700 5 4.700 8-1 15 0 16 5L9 7z" fill="#888" stroke="none" />
        </I>
        <I w={20} h={20} className="ml-[10px]" sw={1.4}>
          <path d="M1 8C3 0 13-2 17 5M18.500 0v5.500H13M1 20v-5.500h5M2 14.500c1 3 4 4.500 7 4.500" /><circle cx="15" cy="15" r="5" fill="#0a78d6" stroke="none" />
        </I>
        <I w={20} h={15} className="ml-[15px]" sw={1.4}>
          <path d="M.5 5.500c5.500-6 13.500-6 19 0M3.500 8.500c4-4 9-4 13 0M6.500 11.300c2-2 5-2 7 0" /><circle cx="10" cy="13.500" r="1.500" fill="currentColor" stroke="none" />
        </I>
        <I w={20} h={16} className="ml-[10px]" sw={1.4}><path d="M.8 5.500h3L9 1.300v13.400L3.800 10.500h-3zM11.500 5.500c1.500 1.500 1.500 3.500 0 5M14 3c3 3 3 7 0 10M16.500.8c4 4.500 4 10 0 14.400" /></I>
        <I w={20} h={13} className="ml-[10px]" sw={1.5}><rect x=".8" y=".8" width="16" height="11" rx="2" /><path d="M3 3h7.500v7H3z" fill="currentColor" stroke="none" /><path d="M18.500 4v4.500" strokeWidth="2.500" /></I>
        <div className="-mt-px ml-[23px] flex w-[60px] flex-col items-end">
          <T w={54}>2:55 PM</T>
          <T w={60}>1/8/2023</T>
        </div>
        <div className="ml-[14px] flex size-5 items-center justify-center rounded-full bg-[#0a78d6] text-white"><T w={7} className="text-[12px]">3</T></div>
      </div>
    </div>
  );
}

export default function App() {
  return (
    <div className="flex h-[1080px] w-[1920px] flex-col overflow-hidden bg-[#efefef] font-['Noto_Sans',sans-serif] text-[#242424]">
      <TitleBar />
      <Tabs />
      <Ribbon />
      <Workspace />
      <StatusBar />
      <Taskbar />
    </div>
  );
}
